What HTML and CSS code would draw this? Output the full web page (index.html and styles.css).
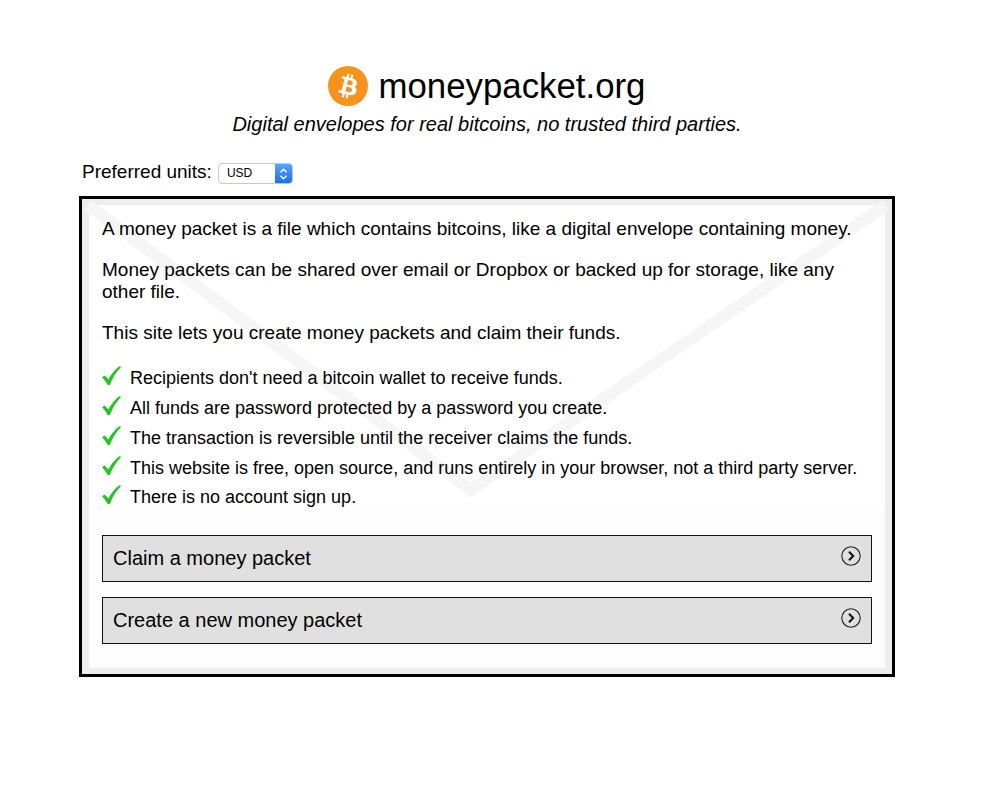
FILE: index.html
```html
<!DOCTYPE html>
<html lang="en">
<head>
  <meta charset="UTF-8">
  <title>moneypacket.org</title>
  <link rel="stylesheet" href="styles.css">
</head>
<body>
  <div class="page">
    <header class="site-header">
      <h1 class="site-title">
        <svg class="site-logo" viewBox="0 0 32 32" aria-hidden="true">
          <circle cx="16" cy="16" r="16" fill="#f7931a"/>
          <path fill="#fff" d="M23.189 14.02c.314-2.096-1.283-3.223-3.465-3.975l.708-2.84-1.728-.43-.69 2.765c-.454-.114-.92-.22-1.385-.326l.695-2.783L15.596 6l-.708 2.839c-.376-.086-.746-.17-1.104-.26l.002-.009-2.384-.595-.46 1.846s1.283.294 1.256.312c.7.175.826.638.805 1.006l-.806 3.235c.048.012.11.03.18.057l-.183-.045-1.13 4.532c-.086.212-.303.531-.793.41.018.025-1.256-.313-1.256-.313l-.858 1.978 2.25.561c.418.105.828.215 1.231.318l-.715 2.872 1.727.43.708-2.84c.472.127.93.245 1.378.357l-.706 2.828 1.728.43.715-2.866c2.948.558 5.164.333 6.097-2.333.752-2.146-.037-3.385-1.588-4.192 1.13-.26 1.98-1.003 2.207-2.538zm-3.95 5.538c-.533 2.147-4.148.986-5.32.695l.95-3.805c1.172.293 4.929.872 4.37 3.11zm.535-5.569c-.487 1.953-3.495.96-4.47.717l.86-3.45c.975.243 4.118.696 3.61 2.733z"/>
        </svg>
        moneypacket.org
      </h1>
      <p class="site-tagline">Digital envelopes for real bitcoins, no trusted third parties.</p>
    </header>

    <div class="units">
      <span>Preferred units:</span>
      <div class="units-select">
        <span class="units-value">USD</span>
        <span class="units-arrows">
          <svg width="9" height="14" viewBox="0 0 9 14" aria-hidden="true">
            <path d="M1.5 5.2 4.5 2.2 7.5 5.2M1.5 8.8 4.5 11.8 7.5 8.8" fill="none" stroke="#fff" stroke-width="1.5"/>
          </svg>
        </span>
      </div>
    </div>

    <main class="packet">
      <!-- faint envelope behind the text -->
      <svg class="envelope" width="810" height="475" viewBox="0 0 810 475" aria-hidden="true">
        <rect width="810" height="475" fill="#eeeeee"/>
        <rect x="7" y="6" width="796" height="463" fill="#ffffff"/>
        <rect x="7" y="309" width="796" height="160" fill="#fdfdfd"/>
        <path d="M6 6 389 291 804 6" fill="none" stroke="#f6f6f6" stroke-width="12"/>
      </svg>

      <div class="packet-body">
        <p>A money packet is a file which contains bitcoins, like a digital envelope containing money.</p>
        <p>Money packets can be shared over email or Dropbox or backed up for storage, like any other file.</p>
        <p>This site lets you create money packets and claim their funds.</p>

        <ul class="features">
          <li><svg class="check" viewBox="0 0 18 18" aria-hidden="true"><use href="#tick"/></svg>Recipients don't need a bitcoin wallet to receive funds.</li>
          <li><svg class="check" viewBox="0 0 18 18" aria-hidden="true"><use href="#tick"/></svg>All funds are password protected by a password you create.</li>
          <li><svg class="check" viewBox="0 0 18 18" aria-hidden="true"><use href="#tick"/></svg>The transaction is reversible until the receiver claims the funds.</li>
          <li><svg class="check" viewBox="0 0 18 18" aria-hidden="true"><use href="#tick"/></svg>This website is free, open source, and runs entirely in your browser, not a third party server.</li>
          <li><svg class="check" viewBox="0 0 18 18" aria-hidden="true"><use href="#tick"/></svg>There is no account sign up.</li>
        </ul>

        <div class="action">
          <span>Claim a money packet</span>
          <svg class="chevron" width="20" height="20" viewBox="0 0 20 20" aria-hidden="true"><use href="#next"/></svg>
        </div>
        <div class="action">
          <span>Create a new money packet</span>
          <svg class="chevron" width="20" height="20" viewBox="0 0 20 20" aria-hidden="true"><use href="#next"/></svg>
        </div>
      </div>
    </main>
  </div>

  <svg class="icon-defs" width="0" height="0" aria-hidden="true">
    <symbol id="tick" viewBox="0 0 18 18">
      <path fill="#1fc71f" d="M0 10.6 2.4 9 6.2 12.8C8.6 7.8 12.6 2.8 17 0L18 1C13.4 5.6 9.8 11.8 7.4 18H5.4C4 15.2 2.2 12.8 0 10.6Z"/>
    </symbol>
    <symbol id="next" viewBox="0 0 20 20">
      <circle cx="10" cy="10" r="9.2" fill="none" stroke="#222" stroke-width="1.1"/>
      <path d="M8 5.8 12.2 10 8 14.2" fill="none" stroke="#111" stroke-width="2"/>
    </symbol>
  </svg>
</body>
</html>
```

FILE: styles.css
```css
* {
  box-sizing: border-box;
}

body {
  margin: 0;
  background: #fff;
  color: #000;
  font-family: "Liberation Sans", Arial, sans-serif;
}

.page {
  width: 816px;
  margin-left: 79px;
  padding-top: 65px;
}

/* Header */
.site-header {
  text-align: center;
}

.site-title {
  display: flex;
  justify-content: center;
  align-items: center;
  gap: 11px;
  margin: 0;
  height: 42px;
  font-size: 34.8px;
  font-weight: normal;
}

.site-logo {
  width: 40px;
  height: 40px;
  margin-left: -1px;
}

.site-tagline {
  margin: 5px 0 0;
  font-size: 20px;
  line-height: 24px;
  font-style: italic;
}

/* Units */
.units {
  display: flex;
  align-items: center;
  gap: 6px;
  margin: 25px 0 13px 3px;
  height: 22px;
  font-size: 19px;
}

.units-select {
  display: flex;
  width: 75px;
  height: 21px;
  margin-top: 3px;
  border: 1px solid #c8c8c8;
  border-radius: 4px;
  overflow: hidden;
  background: #fff;
}

.units-value {
  flex: 1;
  padding-left: 8px;
  font-size: 12px;
  line-height: 19px;
}

.units-arrows {
  display: flex;
  justify-content: center;
  align-items: center;
  width: 17px;
  background: linear-gradient(#5aa5fb, #1a6ef0);
}

/* Main box */
.packet {
  position: relative;
  width: 816px;
  height: 481px;
  border: 3px solid #000;
}

.envelope {
  position: absolute;
  top: 0;
  left: 0;
}

.packet-body {
  position: relative;
  padding: 19px 20px 0;
  font-size: 19px;
  line-height: 22px;
}

.packet-body p {
  margin: 0 0 19px;
}

.features {
  list-style: none;
  margin: 0 0 22.75px;
  padding: 0.5px 0 0;
  font-size: 18px;
}

.features li {
  display: flex;
  align-items: center;
  height: 29.75px;
}

.check {
  width: 19px;
  height: 19px;
  margin: 0 9px 5px 0;
  flex-shrink: 0;
}

.action {
  display: flex;
  justify-content: space-between;
  height: 47px;
  margin-bottom: 15px;
  padding: 0 10px;
  border: 1px solid #111;
  background: #e0e0e0;
  font-size: 20px;
  line-height: 45px;
}

.chevron {
  margin-top: 10px;
}

.icon-defs {
  position: absolute;
}
```
